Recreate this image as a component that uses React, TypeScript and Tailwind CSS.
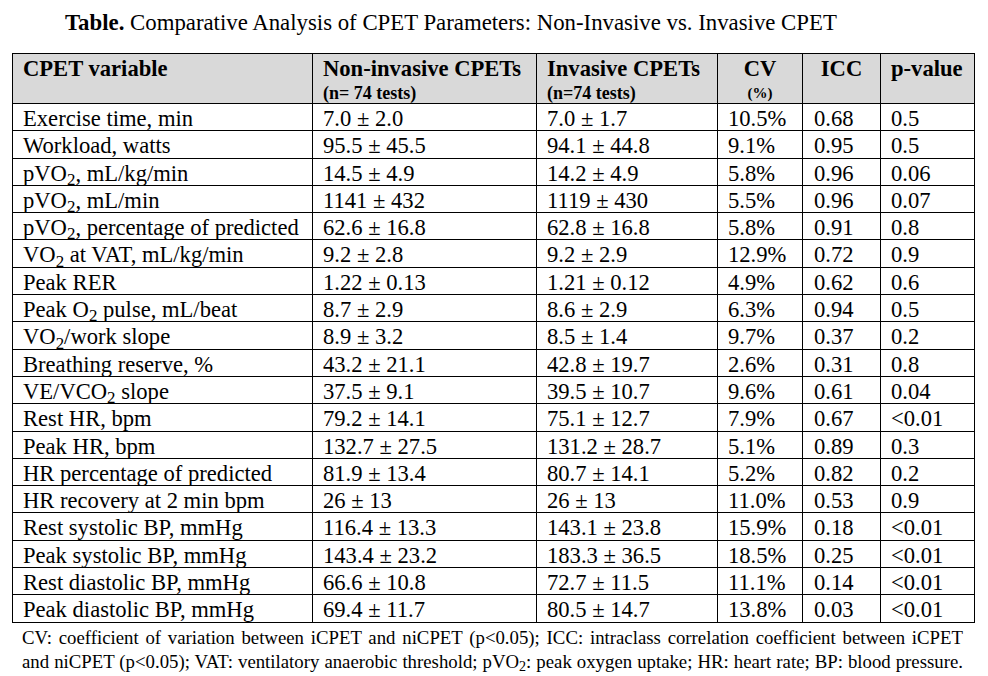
const rows: [React.ReactNode, string, string, string, string, string][] = [
  ["Exercise time, min", "7.0 ± 2.0", "7.0 ± 1.7", "10.5%", "0.68", "0.5"],
  ["Workload, watts", "95.5 ± 45.5", "94.1 ± 44.8", "9.1%", "0.95", "0.5"],
  [<>pVO<sub>2</sub>, mL/kg/min</>, "14.5 ± 4.9", "14.2 ± 4.9", "5.8%", "0.96", "0.06"],
  [<>pVO<sub>2</sub>, mL/min</>, "1141 ± 432", "1119 ± 430", "5.5%", "0.96", "0.07"],
  [<>pVO<sub>2</sub>, percentage of predicted</>, "62.6 ± 16.8", "62.8 ± 16.8", "5.8%", "0.91", "0.8"],
  [<>VO<sub>2</sub> at VAT, mL/kg/min</>, "9.2 ± 2.8", "9.2 ± 2.9", "12.9%", "0.72", "0.9"],
  ["Peak RER", "1.22 ± 0.13", "1.21 ± 0.12", "4.9%", "0.62", "0.6"],
  [<>Peak O<sub>2</sub> pulse, mL/beat</>, "8.7 ± 2.9", "8.6 ± 2.9", "6.3%", "0.94", "0.5"],
  [<>VO<sub>2</sub>/work slope</>, "8.9 ± 3.2", "8.5 ± 1.4", "9.7%", "0.37", "0.2"],
  ["Breathing reserve, %", "43.2 ± 21.1", "42.8 ± 19.7", "2.6%", "0.31", "0.8"],
  [<>VE/VCO<sub>2</sub> slope</>, "37.5 ± 9.1", "39.5 ± 10.7", "9.6%", "0.61", "0.04"],
  ["Rest HR, bpm", "79.2 ± 14.1", "75.1 ± 12.7", "7.9%", "0.67", "<0.01"],
  ["Peak HR, bpm", "132.7 ± 27.5", "131.2 ± 28.7", "5.1%", "0.89", "0.3"],
  ["HR percentage of predicted", "81.9 ± 13.4", "80.7 ± 14.1", "5.2%", "0.82", "0.2"],
  ["HR recovery at 2 min bpm", "26 ± 13", "26 ± 13", "11.0%", "0.53", "0.9"],
  ["Rest systolic BP, mmHg", "116.4 ± 13.3", "143.1 ± 23.8", "15.9%", "0.18", "<0.01"],
  ["Peak systolic BP, mmHg", "143.4 ± 23.2", "183.3 ± 36.5", "18.5%", "0.25", "<0.01"],
  ["Rest diastolic BP, mmHg", "66.6 ± 10.8", "72.7 ± 11.5", "11.1%", "0.14", "<0.01"],
  ["Peak diastolic BP, mmHg", "69.4 ± 11.7", "80.5 ± 14.7", "13.8%", "0.03", "<0.01"],
];

const cell = "border border-black align-top pt-[4px] pl-[10px] leading-[22px]";

export default function App() {
  return (
    <div className="w-[988px] h-[676px] bg-white text-black font-['Liberation_Serif','Times_New_Roman',serif] overflow-hidden">
      <div className="pt-[12px] pl-[65px] text-[22.8px] leading-[22px] h-[34px] whitespace-nowrap">
        <span className="font-bold">Table.</span> Comparative Analysis of CPET Parameters: Non-Invasive vs. Invasive CPET
      </div>
      <table className="mt-[19px] ml-[12px] w-[962px] border-collapse table-fixed text-[22.6px]">
        <colgroup>
          <col className="w-[300px]" />
          <col className="w-[224px]" />
          <col className="w-[181px]" />
          <col className="w-[85px]" />
          <col className="w-[78px]" />
          <col className="w-[94px]" />
        </colgroup>
        <thead>
          <tr className="h-[50px] bg-[#d9d9d9] font-bold text-left">
            <th className={cell}>CPET variable</th>
            <th className={cell}>
              Non-invasive CPETs
              <div className="text-[18px] leading-[17px] mt-[5px]">(n= 74 tests)</div>
            </th>
            <th className={cell}>
              Invasive CPETs
              <div className="text-[18px] leading-[17px] mt-[5px]">(n=74 tests)</div>
            </th>
            <th className={cell + " !pl-0 text-center"}>
              CV
              <div className="text-[15px] leading-[17px] mt-[5px]">(%)</div>
            </th>
            <th className={cell + " !pl-0 text-center"}>ICC</th>
            <th className={cell}>p-value</th>
          </tr>
        </thead>
        <tbody>
          {rows.map((r, i) => (
            <tr key={i} className="h-[27.3px]">
              {r.map((c, j) => (
                <td key={j} className={cell + " whitespace-nowrap" + (j === 4 ? " !pl-[11px]" : "")}>
                  {c}
                </td>
              ))}
            </tr>
          ))}
        </tbody>
      </table>
      <div className="mt-[3px] pl-[22px] pr-[25px] text-[18.8px] leading-[24px]">
        <div className="text-justify [text-align-last:justify]">
          CV: coefficient of variation between iCPET and niCPET (p&lt;0.05); ICC: intraclass correlation coefficient between iCPET
        </div>
        <div className="text-justify [text-align-last:justify]">
          and niCPET (p&lt;0.05); VAT: ventilatory anaerobic threshold; pVO<sub>2</sub>: peak oxygen uptake; HR: heart rate; BP: blood pressure.
        </div>
      </div>
    </div>
  );
}
